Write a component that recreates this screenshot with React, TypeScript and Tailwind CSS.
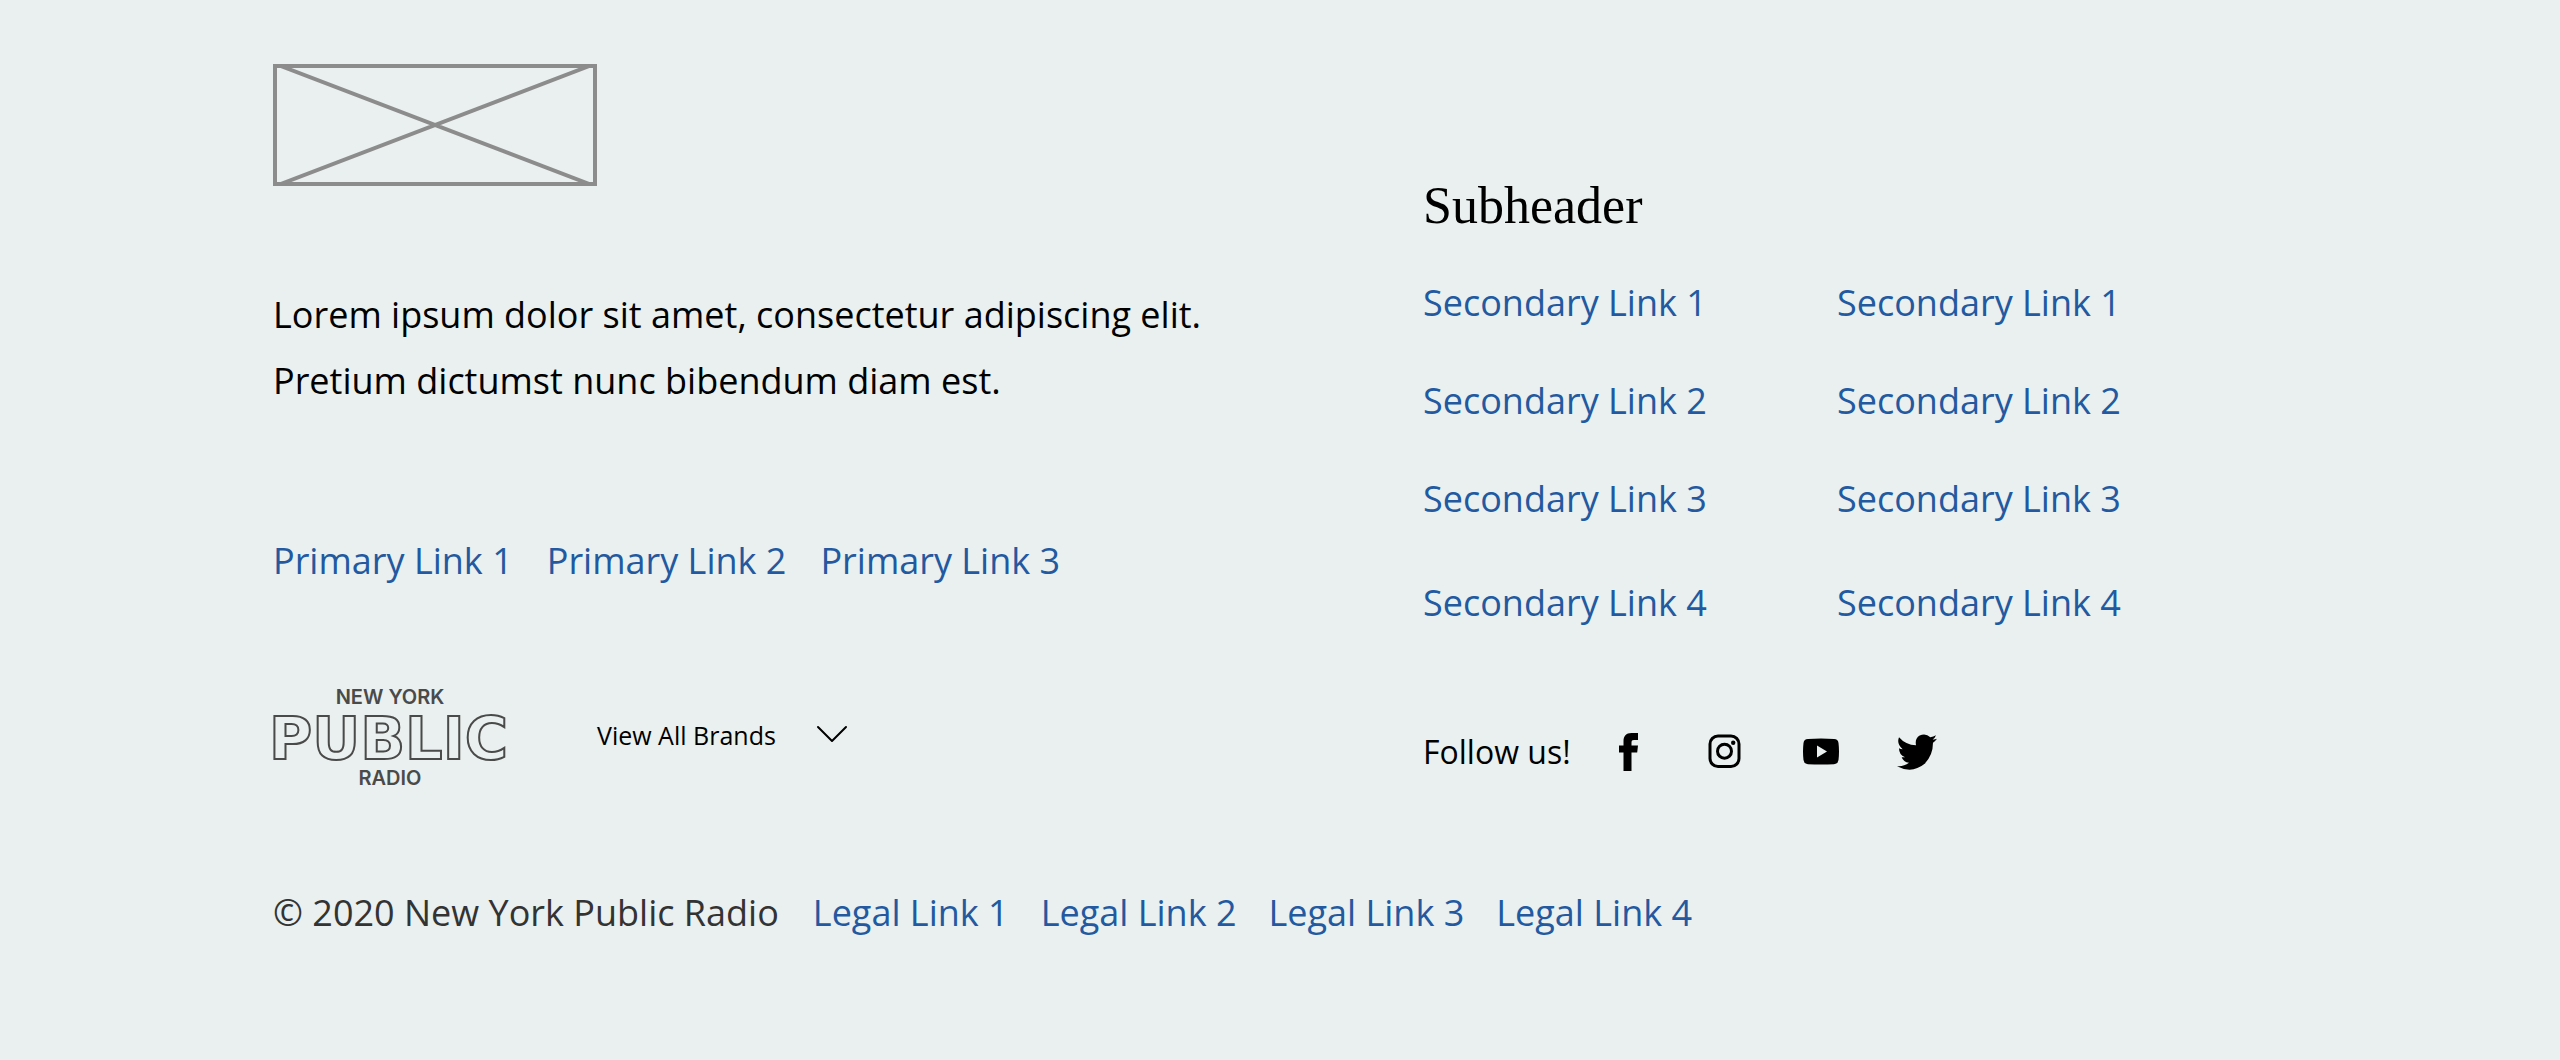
import React from "react";

const linkClass = "text-[#2259a0] hover:underline";

function Placeholder() {
  return (
    <svg className="block h-[122px] w-[324px]" viewBox="0 0 324 122" fill="none" stroke="#8c8c8c" role="img" aria-label="Logo placeholder">
      <rect x="2" y="2" width="320" height="118" strokeWidth="4" />
      <path d="M5 1 319 121M319 1 5 121" strokeWidth="4" />
    </svg>
  );
}

function BrandLogo() {
  return (
    <svg className="block h-24 w-[236px] overflow-visible" viewBox="0 0 236 96" role="img" aria-label="New York Public Radio">
      <g fill="#4a4a4a" fontFamily="Inter, sans-serif" fontSize="20" fontWeight="600" textAnchor="middle">
        <text x="117" y="14">NEW YORK</text>
        <text x="117" y="95">RADIO</text>
      </g>
      <text x="-4" y="69" fontFamily="'DejaVu Sans', sans-serif" fontSize="59" fontWeight="700" fill="none" stroke="#4a4a4a" strokeWidth="2">
        PUBLIC
      </text>
    </svg>
  );
}

const socials = [
  {
    name: "Facebook",
    icon: (
      <svg className="size-10" viewBox="0 0 40 40" fill="currentColor">
        <path d="M14.500 39V20.500H10V13.500h4.500V9.500C14.500 4 17 1 22.500 1H29v7h-4c-2 0-2.500.8-2.500 2.500v3H29l-.8 7h-5.700V39z" />
      </svg>
    ),
  },
  {
    name: "Instagram",
    icon: (
      <svg className="size-10" viewBox="0 0 40 40" fill="none" stroke="currentColor" strokeWidth="3">
        <rect x="5" y="4" width="29" height="30.500" rx="8" />
        <circle cx="19.500" cy="19.200" r="7" />
        <circle cx="28.200" cy="10.800" r="2.200" fill="currentColor" stroke="none" />
      </svg>
    ),
  },
  {
    name: "YouTube",
    icon: (
      <svg className="size-10" viewBox="0 0 40 40" fill="currentColor">
        <path fillRule="evenodd" d="M7 7Q20 6.200 33 7Q37 7.200 37.500 11Q38.500 19.500 37.500 28Q37 32 33 32.200Q20 33 7 32.200Q3 32 2.500 28Q1.500 19.500 2.500 11Q3 7.200 7 7ZM16 13.500v12l10-6z" />
      </svg>
    ),
  },
  {
    name: "Twitter",
    icon: (
      <svg className="size-10" viewBox="52 22.500 120 120" fill="currentColor">
        <path d="M52 125Q72 127 88 115Q71 112 66 98Q71 99 76 98Q58 91 58 71Q63 74 69 74Q50 58 58 38Q78 61 109 62Q105 42 120 33Q138 25 152 38Q161 37 169 32Q166 40 159 45Q165 46 172 43Q167 50 160 55Q160 92 135 118Q97 149 52 125Z" />
      </svg>
    ),
  },
];

const secondary = [1, 2, 3];

function SecondaryRow({ n }: { n: number }) {
  return (
    <>
      <div><a href="#" className={linkClass}>Secondary Link {n}</a></div>
      <div><a href="#" className={linkClass}>Secondary Link {n}</a></div>
    </>
  );
}

export default function App() {
  return (
    <footer className="min-h-screen bg-[#e9f0ef] px-[273px] pt-16 pb-24 font-['Open_Sans',sans-serif] text-4xl text-black">
      <div className="grid grid-cols-[1150fr_864fr]">
        <div>
          <Placeholder />
          <p className="mt-24 leading-[66px]">
            Lorem ipsum dolor sit amet, consectetur adipiscing elit.
            <br />
            Pretium dictumst nunc bibendum diam est.
          </p>
          <nav aria-label="Primary" className="mt-[114px] flex gap-[34px] leading-[66px]">
            {[1, 2, 3].map((n) => (
              <a key={n} href="#" className={linkClass}>Primary Link {n}</a>
            ))}
          </nav>
          <div className="mt-24 flex items-center gap-[88px]">
            <BrandLogo />
            <button type="button" className="flex items-center gap-10 pb-1.5 text-[25px] leading-9">
              View All Brands
              <svg className="h-5 w-8" viewBox="0 0 32 20" fill="none" stroke="currentColor" strokeWidth="2" strokeLinecap="round" strokeLinejoin="round">
                <path d="M2 2 16 16 30 2" />
              </svg>
            </button>
          </div>
        </div>
        <div className="pt-[110px]">
          <h2 className="font-['Liberation_Serif',serif] text-[52px] leading-[64px]">Subheader</h2>
          <nav aria-label="Secondary" className="mt-8 leading-[66px]">
            <div className="grid grid-cols-[414fr_450fr] gap-y-8">
              {secondary.map((n) => (
                <SecondaryRow key={n} n={n} />
              ))}
            </div>
            <div className="mt-[38px] grid grid-cols-[414fr_450fr]">
              <SecondaryRow n={4} />
            </div>
          </nav>
          <div className="mt-[94px] flex items-center text-[32px] leading-[44px]">
            <span>Follow us!</span>
            <div className="ml-[38px] flex gap-14">
              {socials.map((s) => (
                <a key={s.name} href="#" aria-label={s.name}>{s.icon}</a>
              ))}
            </div>
          </div>
        </div>
      </div>
      <div className="mt-[94px] flex gap-[34px] leading-[66px]">
        <span className="text-[#333333]">© 2020 New York Public Radio</span>
        <nav aria-label="Legal" className="flex gap-8">
          {[1, 2, 3, 4].map((n) => (
            <a key={n} href="#" className={linkClass}>Legal Link {n}</a>
          ))}
        </nav>
      </div>
    </footer>
  );
}
